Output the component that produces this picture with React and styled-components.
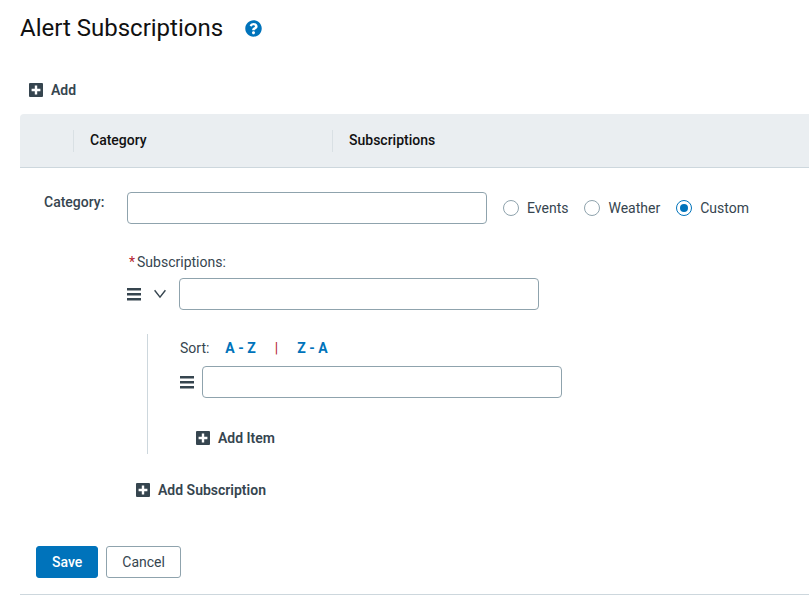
import React, { useState } from "react";
import { FaQuestionCircle } from "react-icons/fa";
import styled, { createGlobalStyle } from "styled-components";

const GlobalStyle = createGlobalStyle`
    *,
    *::before,
    *::after {
        box-sizing: border-box;
    }

    body {
        background: #ffffff;
        color: #36454f;
        font-family: Roboto, "Liberation Sans", sans-serif;
        font-size: 14px;
        line-height: 20px;
        margin: 0;
    }

    button,
    input {
        color: inherit;
        font: inherit;
    }
`;

const Page = styled.main`
    padding: 12px 0 0 20px;
`;

const PageHeader = styled.header`
    align-items: center;
    display: flex;
    gap: 22px;
    margin-bottom: 29px;
`;

const Title = styled.h1`
    color: #111111;
    font-size: 24px;
    font-weight: 400;
    line-height: 33px;
    margin: 0;
`;

const IconButton = styled.button`
    align-items: center;
    background: none;
    border: none;
    color: ${props => props.$color || "#36454f"};
    cursor: pointer;
    display: flex;
    flex: none;
    padding: 0;
`;

const StyledAddButton = styled.button`
    align-items: center;
    background: none;
    border: 1px solid transparent;
    cursor: pointer;
    display: flex;
    font-weight: 600;
    gap: 8px;
    height: 32px;
    padding: 0 8px;
`;

const PlusIcon = () => (
    <svg width="14" height="14" viewBox="0 0 14 14" aria-hidden="true">
        <rect width="14" height="14" rx="1" fill="#36454f" />
        <path d="M7 2.6v8.8M2.6 7h8.8" stroke="#ffffff" strokeWidth="2.4" />
    </svg>
);

const MenuIcon = () => (
    <svg width="14" height="14" viewBox="0 0 14 14" aria-hidden="true">
        <path d="M0 1h14v2.4H0zM0 6h14v2.4H0zM0 11h14v2.4H0z" fill="#36454f" />
    </svg>
);

const ChevronIcon = () => (
    <svg width="12" height="12" viewBox="0 0 12 12" aria-hidden="true">
        <path d="M0.6 2.2L6 9.2L11.4 2.2" fill="none" stroke="#36454f" strokeWidth="1.4" />
    </svg>
);

const AddButton = ({ children, className }) => (
    <StyledAddButton type="button" className={className}>
        <PlusIcon />
        <span>{children}</span>
    </StyledAddButton>
);

const AddItemButton = styled(AddButton)`
    margin: 24px 0 0 7px;
`;

const AddSubscriptionButton = styled(AddButton)`
    margin-top: 20px;
`;

const Table = styled.table`
    border-collapse: separate;
    border-spacing: 0;
    margin-top: 8px;
    table-layout: fixed;
    width: 100%;
`;

const HeaderCell = styled.th`
    background: #eaeef1;
    border-bottom: 1px solid #cdd7dd;
    height: 54px;
    padding: 0;
    text-align: left;
    width: ${props => props.$width || "auto"};

    &:first-child {
        border-top-left-radius: 4px;
    }
`;

const HeaderLabel = styled.div`
    border-left: 1px solid #d9e0e4;
    color: #111111;
    font-weight: 500;
    padding: 0 0 2px 16px;
`;

const FormCell = styled.td`
    border-bottom: 1px solid #cdd7dd;
    padding: 24px 0 16px;
`;

const Fields = styled.div`
    column-gap: 16px;
    display: grid;
    grid-template-columns: 67px 1fr;
    padding-left: 24px;
`;

const FieldLabel = styled.label`
    font-weight: 500;
`;

const FieldRow = styled.div`
    align-items: center;
    display: flex;
    gap: ${props => props.$gap || "16px"};
`;

const TextInput = styled.input`
    background: #ffffff;
    border: 1px solid #8fa3ad;
    border-radius: 4px;
    height: 32px;
    max-width: 360px;
    min-width: 0;
    padding: 0 8px;
    width: 100%;
`;

const RadioLabel = styled.label`
    align-items: center;
    cursor: pointer;
    display: flex;
    gap: 8px;
`;

const Radio = styled.input`
    appearance: none;
    background: #ffffff;
    border: 1px solid #8fa3ad;
    border-radius: 50%;
    display: grid;
    height: 16px;
    margin: 0;
    place-items: center;
    width: 16px;

    &:checked {
        border-color: #0073bb;
    }

    &:checked::before {
        background: #0073bb;
        border-radius: 50%;
        content: "";
        height: 8px;
        width: 8px;
    }
`;

const SubscriptionLabel = styled.label`
    display: flex;
    gap: 2px;
    margin: 28px 0 6px 2px;
`;

const Required = styled.span`
    color: #b5232f;
`;

const Items = styled.div`
    border-left: 1px solid #cdd7dd;
    margin: 24px 0 0 20px;
    padding: 4px 0 0 32px;
`;

const SortBar = styled.div`
    display: flex;
    margin-bottom: 8px;
`;

const SortButton = styled.button`
    background: none;
    border: none;
    color: #0073bb;
    cursor: pointer;
    font-weight: 700;
    padding: 0 16px;
`;

const SortDivider = styled.span`
    color: #b5232f;
    padding: 0 3px;
`;

const Actions = styled.div`
    display: flex;
    gap: 8px;
    margin-top: 40px;
    padding-left: 16px;
`;

const Button = styled.button`
    background: ${props => (props.$primary ? "#0073bb" : "#ffffff")};
    border: 1px solid ${props => (props.$primary ? "#0073bb" : "#8fa3ad")};
    border-radius: 3px;
    color: ${props => (props.$primary ? "#ffffff" : "#36454f")};
    cursor: pointer;
    font-weight: ${props => (props.$primary ? 500 : 400)};
    height: 32px;
    padding: 0 15px;
`;

const categories = ["Events", "Weather", "Custom"];

const CategoryOptions = () => {
    const [selected, setSelected] = useState("Custom");

    return categories.map(category => (
        <RadioLabel key={category}>
            <Radio
                type="radio"
                name="category-type"
                value={category}
                checked={selected === category}
                onChange={() => setSelected(category)}
            />
            {category}
        </RadioLabel>
    ));
};

const SubscriptionItems = () => (
    <Items>
        <SortBar>
            <span>Sort:</span>
            <SortButton type="button">A - Z</SortButton>
            <SortDivider>|</SortDivider>
            <SortButton type="button">Z - A</SortButton>
        </SortBar>
        <FieldRow $gap="8px">
            <IconButton type="button" aria-label="Reorder item">
                <MenuIcon />
            </IconButton>
            <TextInput type="text" aria-label="Item" />
        </FieldRow>
        <AddItemButton>Add Item</AddItemButton>
    </Items>
);

const SubscriptionForm = () => (
    <form onSubmit={e => e.preventDefault()}>
        <Fields>
            <FieldLabel htmlFor="category">Category:</FieldLabel>
            <div>
                <FieldRow>
                    <TextInput id="category" type="text" />
                    <CategoryOptions />
                </FieldRow>
                <SubscriptionLabel htmlFor="subscription">
                    <Required>*</Required>
                    <span>Subscriptions:</span>
                </SubscriptionLabel>
                <FieldRow $gap="13px">
                    <IconButton type="button" aria-label="Reorder subscription">
                        <MenuIcon />
                    </IconButton>
                    <IconButton type="button" aria-label="Collapse subscription">
                        <ChevronIcon />
                    </IconButton>
                    <TextInput id="subscription" type="text" required />
                </FieldRow>
                <SubscriptionItems />
                <AddSubscriptionButton>Add Subscription</AddSubscriptionButton>
            </div>
        </Fields>
        <Actions>
            <Button type="submit" $primary>
                Save
            </Button>
            <Button type="button">Cancel</Button>
        </Actions>
    </form>
);

const App = () => (
    <>
        <GlobalStyle />
        <Page>
            <PageHeader>
                <Title>Alert Subscriptions</Title>
                <IconButton type="button" aria-label="Help" $color="#0073bb">
                    <FaQuestionCircle size={17} />
                </IconButton>
            </PageHeader>
            <AddButton>Add</AddButton>
            <Table>
                <thead>
                    <tr>
                        <HeaderCell $width="53px" />
                        <HeaderCell $width="259px">
                            <HeaderLabel>Category</HeaderLabel>
                        </HeaderCell>
                        <HeaderCell>
                            <HeaderLabel>Subscriptions</HeaderLabel>
                        </HeaderCell>
                    </tr>
                </thead>
                <tbody>
                    <tr>
                        <FormCell colSpan={3}>
                            <SubscriptionForm />
                        </FormCell>
                    </tr>
                </tbody>
            </Table>
        </Page>
    </>
);

export default App;
